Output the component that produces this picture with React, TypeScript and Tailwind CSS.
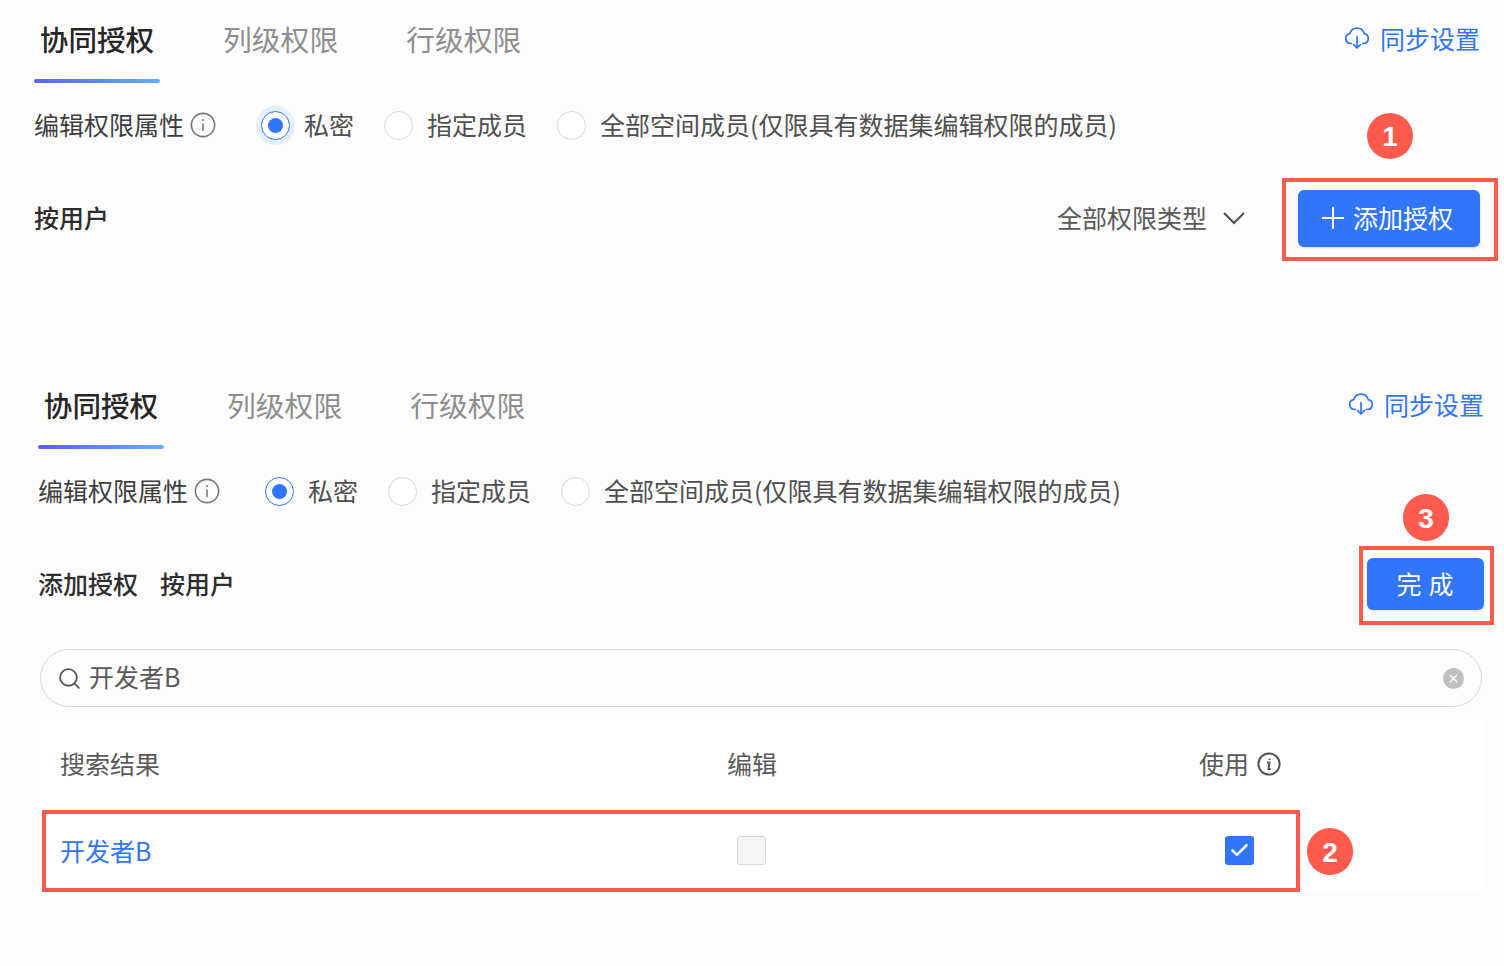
import { Check, Search, X } from 'lucide-react'
import type { ReactNode } from 'react'

const RADIOS = [
  { label: '私密', checked: true, width: 'w-[123px]' },
  { label: '指定成员', checked: false, width: 'w-[173px]' },
  { label: '全部空间成员(仅限具有数据集编辑权限的成员)', checked: false, width: 'w-auto' },
]

function CloudIcon() {
  return (
    <svg width="26" height="26" viewBox="0 0 26 26" fill="none" stroke="currentColor" strokeWidth="1.7" strokeLinecap="round" strokeLinejoin="round" className="mb-[2px] -ml-[1px]">
      <path d="M7.5 18.5H6.5a5 5 0 0 1-.7-9.9A7.5 7.5 0 0 1 20.2 8.6a5 5 0 0 1-.7 9.9h-1" />
      <path d="M13 11.5V23M9.6 19.6 13 23l3.4-3.4" />
    </svg>
  )
}

function InfoThin() {
  return (
    <svg width="26" height="26" viewBox="0 0 26 26" fill="none" stroke="#777" strokeWidth="1.6">
      <circle cx="13" cy="13" r="11.6" />
      <path d="M13 11.5v7.5M13 7v2" />
    </svg>
  )
}

function InfoItalic() {
  return (
    <svg width="24" height="24" viewBox="0 0 24 24" fill="none" stroke="#555" strokeWidth="2">
      <circle cx="12" cy="12" r="10.6" />
      <path d="M10 10.5h2.5l-1 6.5h2.2M12.6 6.5v1.6" strokeWidth="1.9" />
    </svg>
  )
}

function Badge({ n, className }: { n: number; className: string }) {
  return (
    <div className={`absolute flex w-[46px] items-center justify-center rounded-full bg-[#ff5a4d] pt-[2px] font-['Liberation_Sans',sans-serif] text-[28px] font-bold text-white ${className}`}>
      {n}
    </div>
  )
}

function Panel({ halo, children }: { halo?: boolean; children: ReactNode }) {
  return (
    <div className="flex flex-col">
      {/* Tabs */}
      <div className="flex h-[83px] items-start justify-between">
        <div className="flex">
          <div className="flex w-[126px] flex-col items-center">
            <div className="mt-[19px] h-[40px] text-[28.6px] leading-[40px] font-medium text-[#262626]">协同授权</div>
            <div className="mt-[20px] h-[4px] w-full rounded-[2px] bg-gradient-to-r from-[#5f5cff] to-[#5fb0ff]" />
          </div>
          <div className="mt-[19px] ml-[63px] text-[28.8px] leading-[40px] text-[#8e8e8e]">列级权限</div>
          <div className="mt-[19px] ml-[68px] text-[28.8px] leading-[40px] text-[#8e8e8e]">行级权限</div>
        </div>
        <div className="mt-[20px] flex h-[38px] items-center gap-[10px] text-[25px] text-[#3175fb]">
          <CloudIcon />
          <span>同步设置</span>
        </div>
      </div>

      {/* Edit permission attribute */}
      <div className="mt-[23px] flex h-[38px] items-center text-[25px] text-[#4f4f4f]">
        <span className="text-[#3d3d3d]">编辑权限属性</span>
        <span className="ml-[6px]"><InfoThin /></span>
        <div className="ml-[45px] flex items-center">
          {RADIOS.map((r) => (
            <div key={r.label} className={`flex items-center gap-[14px] ${r.width}`}>
              {r.checked ? (
                <span className={`flex h-[29px] w-[29px] items-center justify-center rounded-full border border-[#3175fb] bg-white ${halo ? 'shadow-[0_0_0_5px_#e6effe]' : ''}`}>
                  <span className="h-[15px] w-[15px] rounded-full bg-[#3175fb]" />
                </span>
              ) : (
                <span className="h-[29px] w-[29px] rounded-full border border-[#d9d9d9] bg-white" />
              )}
              <span>{r.label}</span>
            </div>
          ))}
        </div>
      </div>
      {children}
    </div>
  )
}

export default function App() {
  return (
    <div className="relative h-[966px] w-[1504px] overflow-hidden bg-[#fdfdfd] font-['Noto_Sans_CJK_SC','Noto_Sans',sans-serif]">
      <div className="flex h-[366px] flex-col pr-[24px] pl-[34px]">
        <Panel halo>
          <div className="mt-[45px] flex h-[58px] items-center justify-between">
            <span className="text-[25px] font-medium text-[#2e2e2e]">按用户</span>
            <div className="flex items-center">
              <span className="text-[25px] text-[#595959]">全部权限类型</span>
              <svg width="24" height="14" viewBox="0 0 24 14" fill="none" stroke="#4f4f4f" strokeWidth="2" className="mr-[52px] ml-[15px]">
                <path d="M2 2l10 10L22 2" />
              </svg>
              <button className="flex h-[57px] w-[182px] items-center justify-center gap-[9px] rounded-[6px] bg-[#3175fb] pr-[3px] text-[25px] text-white shadow-sm">
                <svg width="22" height="22" viewBox="0 0 22 22" stroke="currentColor" strokeWidth="2">
                  <path d="M0 11h22M11 0v22" />
                </svg>
                添加授权
              </button>
            </div>
          </div>
        </Panel>
      </div>

      <div className="flex flex-col pr-[20px] pl-[38px]">
        <Panel>
          <div className="mt-[48px] flex h-[52px] items-center justify-between">
            <div className="flex gap-[22px] text-[25px] font-medium text-[#2e2e2e]">
              <span>添加授权</span>
              <span>按用户</span>
            </div>
            <button className="h-[52px] w-[117px] rounded-[6px] bg-[#3175fb] pl-[6px] text-[25px] tracking-[7px] text-white shadow-sm">完成</button>
          </div>

          {/* Search */}
          <div className="mx-[2px] mt-[39px] flex h-[58px] items-center rounded-full border border-[#d9d9d9] px-[17px] text-[25px] text-[#595959]">
            <Search size={25} strokeWidth={1.8} className="-ml-[1px]" />
            <span className="ml-[7px] flex-1 pb-[2px]">开发者B</span>
            <span className="flex h-[21px] w-[21px] items-center justify-center rounded-full bg-[#bfbfbf] text-white">
              <X size={13} strokeWidth={2.4} />
            </span>
          </div>

          {/* Results */}
          <div className="mt-[13px] flex flex-col bg-white text-[25px]">
            <div className="flex h-[90px] items-center pb-[3px] pl-[22px] text-[#595959]">
              <span className="w-[667px]">搜索结果</span>
              <span className="w-[472px]">编辑</span>
              <span className="flex items-center gap-[8px]">使用 <InfoItalic /></span>
            </div>
            <div className="flex h-[82px] items-center pl-[22px]">
              <span className="w-[677px] text-[#3175fb]">开发者B</span>
              <span className="mb-[2px] h-[29px] w-[29px] rounded-[3px] border border-[#d9d9d9] bg-[#f5f5f5]" />
              <span className="mb-[2px] ml-[459px] flex h-[29px] w-[29px] items-center justify-center rounded-[3px] bg-[#3175fb] text-white">
                <Check size={21} strokeWidth={3} />
              </span>
            </div>
          </div>
        </Panel>
      </div>

      {/* Annotations */}
      <div className="absolute top-[178px] left-[1282px] h-[83px] w-[216px] border-4 border-[#ff5a4d]" />
      <div className="absolute top-[546px] left-[1359px] h-[79px] w-[135px] border-4 border-[#ff5a4d]" />
      <div className="absolute top-[810px] left-[42px] h-[82px] w-[1258px] border-4 border-[#ff5a4d]" />
      <Badge n={1} className="top-[113px] left-[1367px] h-[46px]" />
      <Badge n={3} className="top-[494px] left-[1403px] h-[47px]" />
      <Badge n={2} className="top-[828px] left-[1307px] h-[47px]" />
    </div>
  )
}
